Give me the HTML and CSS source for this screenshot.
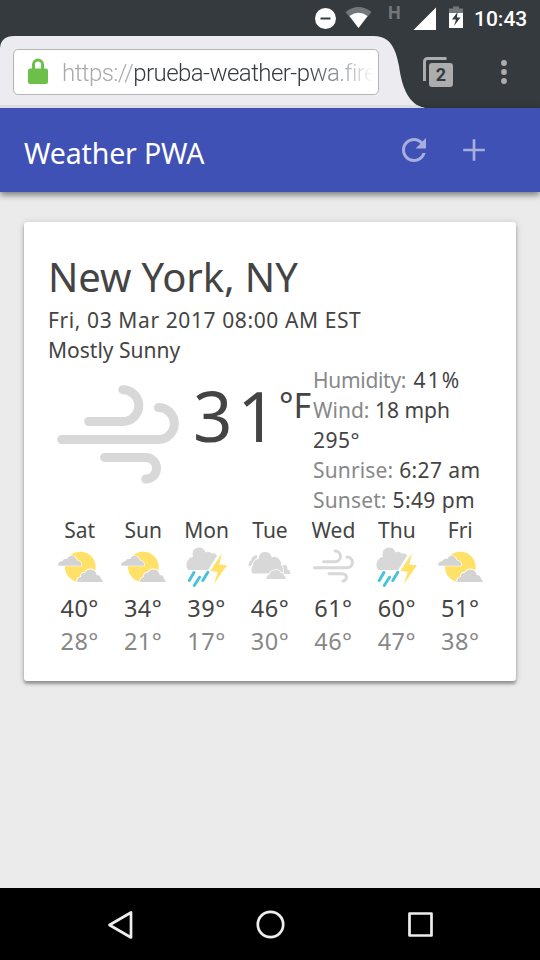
FILE: index.html
```html
<!DOCTYPE html>
<html lang="en">
<head>
<meta charset="utf-8">
<title>Weather PWA</title>
<link rel="stylesheet" href="styles.css">
</head>
<body>
<svg class="defs" aria-hidden="true">
  <symbol id="wind" viewBox="50 74 367 298">
    <path d="M145 184H248A48 48 0 0 0 248 88M64 238H355A48 48 0 0 0 355 142M193 292H317A32.500 32.500 0 0 1 317 357" fill="none" stroke="#d8d8d8" stroke-width="27" stroke-linecap="round"/>
  </symbol>
  <symbol id="partly" viewBox="50 105 138 126">
    <circle cx="120" cy="171" r="46" fill="#ffe168"/>
    <path d="M54 167Q51 156 66 153Q71 145 80 147Q90 131 104 142Q109 147 109 151Q122 152 123 167Z" fill="#d3d3d3" stroke="#fff" stroke-width="4" paint-order="stroke"/>
    <path d="M111 216Q109 203 122 201Q120 188 134 188Q144 172 162 182Q169 188 169 196Q181 193 181 206Q188 209 187 216Z" fill="#d3d3d3" stroke="#fff" stroke-width="5" paint-order="stroke"/>
  </symbol>
  <symbol id="storm" viewBox="438 105 130 126">
    <path d="M447 180Q437 162 448 149Q452 142 462 141Q457 119 474 113Q493 108 500 127Q510 122 519 130Q529 128 535 136L508 180Z" fill="#d8d8d8"/>
    <path d="M549 130L515 182L537 186L525 223L565 166L542 164Z" fill="#ffe168"/>
    <path d="M465 188L451 212M482 202L466 227M507 187L492 212" stroke="#4bc2dc" stroke-width="9" stroke-linecap="round"/>
  </symbol>
  <symbol id="cloudy" viewBox="55 105 130 126">
    <path d="M57 168Q56 154 64 151Q66 137 82 135L82 143L62 169Z" fill="#d8d8d8"/>
    <path d="M155 171Q158 163 170 166Q176 171 174 178Q183 180 183 192H157Z" fill="#d8d8d8"/>
    <path d="M69 191Q61 176 71 165Q69 149 87 147Q88 127 105 126Q122 125 127 142Q140 135 151 150Q157 158 154 164Q164 173 161 191Z" fill="#d8d8d8" stroke="#fff" stroke-width="4" paint-order="stroke"/>
    <path d="M111 207Q110 196 121 194Q122 181 137 181Q148 176 154 190Q163 186 163 197Q170 200 169 207Z" fill="#d8d8d8" stroke="#fff" stroke-width="5" paint-order="stroke"/>
  </symbol>
</svg>

<div class="status">
  <svg width="24" height="36" viewBox="314 0 24 36"><circle cx="325.500" cy="18.500" r="10.500" fill="#fff"/><path d="M320.500 18.500h10" stroke="#353a3f" stroke-width="2"/></svg>
  <svg width="28" height="36" viewBox="345 0 28 36"><path d="M345.500 12Q358.500 2 371.500 12L358.500 28Z" fill="#73777a"/><path d="M349.500 16Q358.500 9.500 367.500 16L358.500 28Z" fill="#fff"/></svg>
  <span class="net">H</span>
  <svg width="25" height="36" viewBox="412 0 25 36"><path d="M413.500 30L436 7.500V30Z" fill="#fff"/></svg>
  <svg class="battery" width="15" height="36" viewBox="449 0 15 36"><path d="M449 8.500h4v-2h6v2h4V13H449Z" fill="#73777a"/><path d="M449 13h14v15H449Z" fill="#fff"/><path d="M457.500 12L452 19.500h4L454 26L460.500 17.500h-3.500Z" fill="#353a3f"/></svg>
  <span class="clock">10:43</span>
</div>

<div class="browser">
  <div class="tab">
    <div class="omnibox">
      <svg width="20" height="26" viewBox="0 0 20 26"><path d="M5.500 12V6.500a4.500 4.500 0 0 1 9 0V12" fill="none" stroke="#6cc04a" stroke-width="3"/><rect y="10.500" width="20" height="15.500" rx="2" fill="#6cc04a"/></svg>
      <span class="url"><span class="scheme">https://</span>prueba-weather-pwa.fire</span>
    </div>
  </div>
  <div class="tabs">
    <svg width="32" height="32" viewBox="0 0 32 32"><path d="M1.500 24V4.500a3 3 0 0 1 3-3H23.500" fill="none" stroke="#adadad" stroke-width="3"/><rect x="6" y="6" width="24" height="24" rx="3" fill="#adadad"/><text x="18" y="24" text-anchor="middle" class="tab-count">2</text></svg>
  </div>
  <svg class="more" width="6" height="26" viewBox="0 0 6 26"><g fill="#adadad"><circle cx="3" cy="4" r="2.900"/><circle cx="3" cy="13" r="2.900"/><circle cx="3" cy="22" r="2.900"/></g></svg>
</div>

<header class="header">
  <h1>Weather PWA</h1>
  <svg class="refresh" width="36" height="36" viewBox="0 0 24 24"><path fill="#a8aedd" d="M17.650 6.350C16.200 4.900 14.210 4 12 4c-4.420 0-7.990 3.580-7.990 8s3.570 8 7.990 8c3.730 0 6.840-2.550 7.730-6h-2.080c-.82 2.330-3.040 4-5.650 4-3.310 0-6-2.690-6-6s2.690-6 6-6c1.660 0 3.140.69 4.220 1.780L13 11h7V4l-2.350 2.350z"/></svg>
  <svg width="36" height="36" viewBox="0 0 24 24"><path fill="#a8aedd" d="M19.200 12.900h-6.300v6.300h-1.800v-6.300H4.800v-1.800h6.300V4.800h1.800v6.300h6.300z"/></svg>
</header>

<main>
  <section class="card">
    <h2>New York, NY</h2>
    <p class="date">Fri, 03 Mar 2017 08:00 AM EST</p>
    <p class="summary">Mostly Sunny</p>
    <div class="current">
      <svg class="big-icon"><use href="#wind"/></svg>
      <div class="temp"><span class="value">31</span><span class="scale">°F</span></div>
      <div class="details">
        <p class="humidity"><span>Humidity:</span> 41%</p>
        <p class="wind"><span>Wind:</span> 18 mph</p>
        <p class="bearing">295°</p>
        <p class="sunrise"><span>Sunrise:</span> 6:27 am</p>
        <p class="sunset"><span>Sunset:</span> 5:49 pm</p>
      </div>
    </div>
    <div class="week">
      <div class="day"><p class="name">Sat</p><svg class="icon w46"><use href="#partly"/></svg><p class="high">40°</p><p class="low">28°</p></div>
      <div class="day"><p class="name">Sun</p><svg class="icon w46"><use href="#partly"/></svg><p class="high">34°</p><p class="low">21°</p></div>
      <div class="day"><p class="name">Mon</p><svg class="icon w43"><use href="#storm"/></svg><p class="high">39°</p><p class="low">17°</p></div>
      <div class="day"><p class="name">Tue</p><svg class="icon w43"><use href="#cloudy"/></svg><p class="high">46°</p><p class="low">30°</p></div>
      <div class="day"><p class="name">Wed</p><svg class="icon w41"><use href="#wind"/></svg><p class="high">61°</p><p class="low">46°</p></div>
      <div class="day"><p class="name">Thu</p><svg class="icon w43"><use href="#storm"/></svg><p class="high">60°</p><p class="low">47°</p></div>
      <div class="day"><p class="name">Fri</p><svg class="icon w46"><use href="#partly"/></svg><p class="high">51°</p><p class="low">38°</p></div>
    </div>
  </section>
</main>

<nav class="navbar">
  <svg width="30" height="30" viewBox="0 0 30 30"><path d="M4.500 15L26 2.500V27.500Z"/></svg>
  <svg width="30" height="30" viewBox="0 0 30 30"><circle cx="15.500" cy="14.500" r="12.700"/></svg>
  <svg width="30" height="30" viewBox="0 0 30 30"><rect x="4.500" y="3.500" width="22" height="22"/></svg>
</nav>
</body>
</html>
```
FILE: styles.css
```css
* { box-sizing: border-box; }
body {
  margin: 0;
  width: 540px;
  height: 960px;
  display: flex;
  flex-direction: column;
  overflow: hidden;
  background: #ebebeb;
  color: #444;
  font-family: "Noto Sans", sans-serif;
}
h1, h2, p { margin: 0; font-weight: 400; white-space: nowrap; }
svg { display: block; flex: none; }
.defs { width: 0; height: 0; position: absolute; }

.status {
  height: 36px;
  flex: none;
  display: flex;
  padding-left: 314px;
  background: #353a3e;
  font-family: Roboto, sans-serif;
}
.status svg:nth-child(2) { margin-left: 7px; }
.net { width: 24px; margin: 1px 0 0 15px; font-size: 18px; line-height: 24px; font-weight: 700; color: #73777a; }
.battery { margin-left: 12px; }
.clock { margin-left: 10px; font-size: 21px; line-height: 38px; font-weight: 500; color: #fff; }

.browser { height: 72px; flex: none; display: flex; background: #353a3e; }
.tab {
  width: 427px;
  padding: 13px 0 0 13px;
  background: #ebebf0;
  border-bottom: 3px solid #dcdce0;
  clip-path: path("M0 72V12Q1 0 14 0H374C391 0 396 14 399 30C402 52 409 69 425 72Z");
}
.omnibox {
  width: 366px;
  height: 46px;
  display: flex;
  padding: 8px 2px 0 14px;
  background: #fff;
  border: 1px solid #b5b5b5;
  border-radius: 5px;
}
.url {
  flex: 1;
  margin-left: 14px;
  white-space: nowrap;
  font: 300 24px/30px Roboto, sans-serif;
  letter-spacing: -.55px;
  color: #333a40;
  -webkit-mask-image: linear-gradient(90deg, #000 245px, transparent 312px);
  mask-image: linear-gradient(90deg, #000 245px, transparent 312px);
}
.scheme { color: #aaa; }
.tabs { margin: 21px 0 0 -4px; }
.tab-count { font: 700 18px Roboto, sans-serif; fill: #353a3e; }
.more { margin: 23px 0 0 46px; }

.header {
  height: 84px;
  flex: none;
  display: flex;
  align-items: center;
  padding: 0 48px 0 24px;
  background: #3f51b5;
  box-shadow: 0 3px 6px rgba(0, 0, 0, .4), 0 1px 10px rgba(0, 0, 0, .15);
  color: #fff;
}
h1 { flex: 1; padding-top: 5px; font-size: 28.500px; line-height: 40px; letter-spacing: -.15px; }
.refresh { margin-right: 24px; }

main { flex: 1; padding: 30px 24px; }
.card {
  height: 459px;
  padding: 30px 24px 0;
  background: #fff;
  border-radius: 3px;
  box-shadow: 0 3px 3px rgba(0, 0, 0, .3), 0 1px 7px rgba(0, 0, 0, .18);
}
h2 { height: 53px; font-size: 40px; line-height: 50px; letter-spacing: -.1px; }
.date, .summary, .details p, .name { font-size: 21px; line-height: 30px; }
.date { letter-spacing: .6px; }
.current { height: 150px; display: flex; }
.big-icon { width: 122px; height: 99px; margin: 20px 0 0 9px; }
.temp { width: 134px; display: flex; padding-left: 14px; }
.value { width: 86px; font-size: 69px; line-height: 94px; padding-top: 3px; letter-spacing: 5px; }
.scale { font-size: 34px; line-height: 44px; padding-top: 18px; }
.details span { color: #888; }
.humidity { letter-spacing: 2px; }
.humidity span { letter-spacing: -.3px; }
.bearing { letter-spacing: .5px; }
.sunrise, .sunset { letter-spacing: .4px; }
.sunrise span, .sunset span { letter-spacing: .15px; }
.week { display: grid; grid-template-columns: repeat(7, 1fr); }
.day { display: flex; flex-direction: column; align-items: center; }
.icon { height: 42px; margin: 0 0 5px; }
.w46 { width: 46px; }
.w43 { width: 43px; }
.w41 { width: 41px; }
.high, .low { font-size: 23.500px; line-height: 33px; letter-spacing: .5px; }
.low { color: #888; }

.navbar {
  height: 72px;
  flex: none;
  display: flex;
  align-items: center;
  justify-content: space-between;
  padding: 1px 105px 0;
  background: #000;
}
.navbar path, .navbar circle, .navbar rect { fill: none; stroke: #eee; stroke-width: 2.700; stroke-linejoin: round; }
```
